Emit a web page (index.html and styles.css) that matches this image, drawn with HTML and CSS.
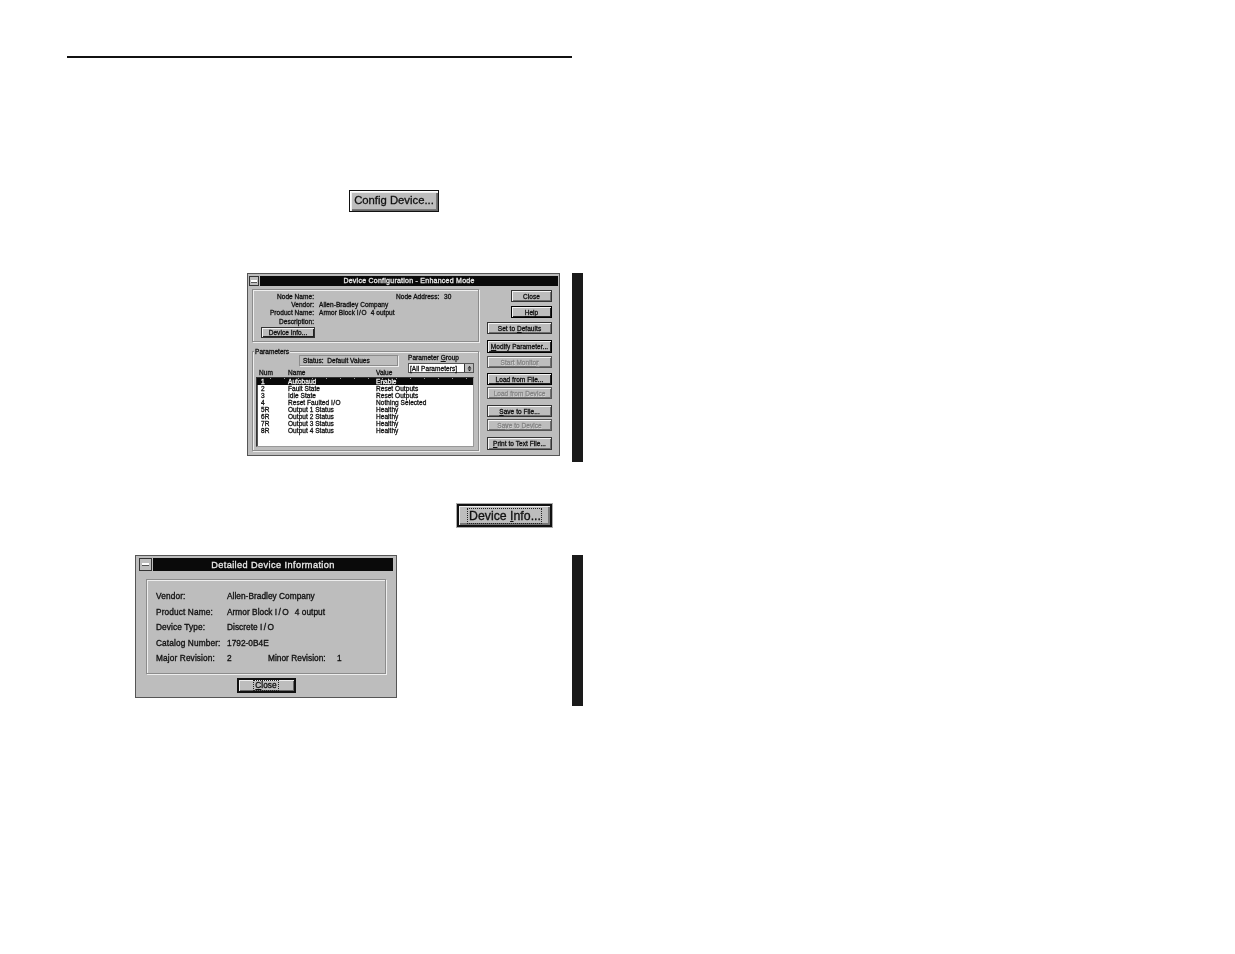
FILE: index.html
```html
<!DOCTYPE html>
<html lang="en">
<head>
<meta charset="utf-8">
<title>Device Configuration</title>
<link rel="stylesheet" href="styles.css">
</head>
<body>
<main class="page">
  <hr class="rule">
  <div class="config-wrap"><button class="shot-btn shot-config">Config Device...</button></div>

  <section class="row row-one">
    <div class="dialog dlg-main">
      <header class="titlebar">
        <span class="sysbox"></span>
        <h1 class="title">Device Configuration - Enhanced Mode</h1>
      </header>
      <div class="main-body">
        <div class="left-col">
          <div class="group info-group">
            <div class="info-grid">
              <span class="lab">Node Name:</span><span></span><span class="addr">Node Address:</span><span>30</span>
              <span class="lab">Vendor:</span><span class="wide">Allen-Bradley Company</span>
              <span class="lab">Product Name:</span><span class="wide">Armor Block <span class="io">I/O</span>&nbsp; 4 output</span>
              <span class="lab">Description:</span><span class="wide"></span>
            </div>
            <button class="btn btn-info">Device <u>I</u>nfo...</button>
          </div>
          <div class="group params-group">
            <span class="legend">Parameters</span>
            <div class="params-top">
              <div class="params-left">
                <div class="status">Status:&nbsp; Default Values</div>
                <div class="cols head"><span>Num</span><span>Name</span><span>Value</span></div>
              </div>
              <div class="params-right">
                <div class="pg-label">Parameter <u>G</u>roup</div>
                <div class="combo">
                  <span class="combo-text">[All Parameters]</span>
                  <span class="combo-arrow">
                    <svg class="arrow-icon" viewBox="0 0 7 8" aria-hidden="true"><path d="M3.5 0.5 L6 3 H1 Z M1 4 H6 V4.8 H1 Z M1 5.5 H6 L3.5 8 Z"/></svg>
                  </span>
                </div>
              </div>
            </div>
            <div class="list">
              <div class="cols item selected"><span>1</span><span>Autobaud</span><span>Enable</span></div>
              <div class="cols item"><span>2</span><span>Fault State</span><span>Reset Outputs</span></div>
              <div class="cols item"><span>3</span><span>Idle State</span><span>Reset Outputs</span></div>
              <div class="cols item"><span>4</span><span>Reset Faulted <span class="io">I/O</span></span><span>Nothing Selected</span></div>
              <div class="cols item"><span>5R</span><span>Output 1 Status</span><span>Healthy</span></div>
              <div class="cols item"><span>6R</span><span>Output 2 Status</span><span>Healthy</span></div>
              <div class="cols item"><span>7R</span><span>Output 3 Status</span><span>Healthy</span></div>
              <div class="cols item"><span>8R</span><span>Output 4 Status</span><span>Healthy</span></div>
            </div>
          </div>
        </div>
        <div class="right-col">
          <div class="stack stack-top">
            <button class="btn btn-short">Close</button>
            <button class="btn btn-short btn-strong"><u>H</u>elp</button>
            <button class="btn">Set to <u>D</u>efaults</button>
          </div>
          <div class="stack stack-mon">
            <button class="btn btn-strong btn-modify"><u>M</u>odify Parameter...</button>
            <button class="btn off">Start Monito<u>r</u></button>
          </div>
          <div class="stack">
            <button class="btn btn-strong"><u>L</u>oad from File...</button>
            <button class="btn off">Load from Device</button>
          </div>
          <div class="stack">
            <button class="btn"><u>S</u>ave to File...</button>
            <button class="btn off">Sa<u>v</u>e to Device</button>
          </div>
          <div class="stack">
            <button class="btn btn-tall"><u>P</u>rint to Text File...</button>
          </div>
        </div>
      </div>
    </div>
    <div class="sidebar side-one"></div>
  </section>

  <div class="info-wrap"><button class="shot-info"><span class="focus">Device <u>I</u>nfo...</span></button></div>

  <section class="row row-two">
    <div class="dialog dlg-detail">
      <header class="titlebar titlebar-lg">
        <span class="sysbox"></span>
        <h2 class="title">Detailed Device Information</h2>
      </header>
      <div class="detail-group">
        <div class="detail-row"><span class="d-lab">Vendor:</span><span>Allen-Bradley Company</span></div>
        <div class="detail-row"><span class="d-lab">Product Name:</span><span>Armor Block <span class="io">I/O</span>&nbsp; 4 output</span></div>
        <div class="detail-row"><span class="d-lab">Device Type:</span><span>Discrete <span class="io">I/O</span></span></div>
        <div class="detail-row"><span class="d-lab">Catalog Number:</span><span>1792-0B4E</span></div>
        <div class="detail-row"><span class="d-lab">Major Revision:</span><span class="d-major">2</span><span class="d-minor">Minor Revision:</span><span>1</span></div>
      </div>
      <div class="detail-foot"><button class="close-btn"><span class="focus"><u>C</u>lose</span></button></div>
    </div>
    <div class="sidebar side-two"></div>
  </section>
</main>
</body>
</html>
```

FILE: styles.css
```css
* { box-sizing: border-box; }
html, body { margin: 0; background: #fff; }
body {
  width: 1235px;
  height: 954px;
  overflow: hidden;
  font-family: "Liberation Sans", Arial, sans-serif;
  color: #111;
}
button { font: inherit; color: inherit; padding: 0; margin: 0; letter-spacing: inherit; }
h1, h2 { margin: 0; font: inherit; }
u { text-underline-offset: 1px; }

.page { padding: 56px 0 0 67px; width: 600px; }
.rule { width: 505px; height: 2px; margin: 0; border: 0; background: #111; }

.config-wrap { margin: 132px 0 0 282px; display: flex; }
.shot-btn {
  width: 90px;
  height: 22px;
  padding-bottom: 2px;
  border: 1px solid #111;
  background: #bdbdbd;
  box-shadow: inset 1px 1px 0 #fff, inset 2px 2px 0 #eee, inset -1px -1px 0 #666, inset -2px -2px 0 #777;
  font-size: 11.3px;
  white-space: nowrap;
  filter: blur(.25px);
  -webkit-text-stroke: .3px #111;
}

.row { display: flex; justify-content: space-between; align-items: flex-start; width: 516px; }
.row-one { margin: 61px 0 0 0; padding-left: 180px; }
.row-two { margin: 28px 0 0 0; padding-left: 68px; }
.sidebar { width: 11px; background: #1a1a1a; }
.side-one { height: 189px; }
.side-two { height: 151px; }

.info-wrap { margin: 42px 0 0 390px; display: flex; }
.shot-info {
  width: 95px;
  height: 23px;
  padding-top: 1px;
  background: #bdbdbd;
  border: 2px solid #111;
  outline: 1px solid #aaa;
  box-shadow: inset 1px 1px 0 #eee, inset -2px -2px 0 #777;
  font-size: 12.3px;
  display: flex;
  align-items: center;
  justify-content: center;
  filter: blur(.25px);
  -webkit-text-stroke: .3px #111;
}
.focus { border: 1px dotted #222; padding: 0 1px; line-height: 1; white-space: nowrap; display: block; }
.shot-info .focus { padding: 1px 0 1px 1px; }

.dialog {
  background: #bdbdbd;
  border: 1px solid #555;
  filter: blur(.3px);
}
.dlg-main {
  width: 313px;
  height: 183px;
  padding: 2px 1px 1px;
  font-size: 6.5px;
  line-height: 7px;
  letter-spacing: .05px;
  -webkit-text-stroke: .3px currentColor;
}
.dlg-detail {
  width: 262px;
  height: 143px;
  padding: 2px 3px;
  font-size: 8.3px;
  letter-spacing: .03px;
  -webkit-text-stroke: .32px currentColor;
}
.io { letter-spacing: .5px; }
.dlg-detail .io { letter-spacing: 1.4px; }

.titlebar { display: flex; gap: 1px; height: 10px; }
.titlebar-lg { height: 13px; }
.sysbox {
  flex: none;
  width: 10px;
  background: #bdbdbd;
  border: 1px solid #333;
  display: flex;
  align-items: center;
  justify-content: center;
}
.titlebar-lg .sysbox { width: 13px; }
.sysbox::before { content: ""; width: 70%; height: 2px; background: #fff; border-bottom: 1px solid #555; }
.title {
  flex: 1;
  background: #0a0a0a;
  color: #e8e8e8;
  text-align: center;
  line-height: 10px;
  font-size: 7px;
  font-weight: 400;
  letter-spacing: .25px;
}
.titlebar-lg .title { line-height: 14px; font-size: 9.2px; letter-spacing: .4px; }

.main-body { display: flex; padding: 3px 0 0 3px; }
.left-col { width: 227px; flex: none; }
.right-col { margin: 1px 0 0 8px; width: 65px; display: flex; flex-direction: column; gap: 6px; }

.group {
  position: relative;
  border: 1px solid #8c8c8c;
  box-shadow: 1px 1px 0 #eee, inset 1px 1px 0 #eee;
}
.info-group { height: 53px; padding: 3px 0 0 0; }
.params-group { height: 100px; margin-top: 9px; }

.info-grid {
  display: grid;
  grid-template-columns: 61px 72px 43px auto;
  column-gap: 5px;
  row-gap: 1.2px;
  white-space: nowrap;
}
.lab, .addr { text-align: right; }
.wide { grid-column: 2 / 5; }

.btn {
  display: block;
  width: 65px;
  height: 12px;
  border: 1px solid #333;
  background: #bdbdbd;
  box-shadow: inset 1px 1px 0 #f4f4f4, inset -1px -1px 0 #6e6e6e;
  font-size: 6.5px;
  line-height: 9px;
  white-space: nowrap;
  overflow: hidden;
}
.btn-short { width: 41px; margin-left: 24px; }
.btn-strong { border-color: #000; box-shadow: inset 1px 1px 0 #f4f4f4, inset -1px -1px 0 #222; }
.btn-modify { height: 13px; }
.btn-tall { height: 13px; }
.btn-info { width: 54px; height: 11px; margin: 2px 0 0 8px; box-shadow: inset 1px 1px 0 #f4f4f4, inset -1px -1px 0 #222; }
.off { color: #868686; text-shadow: .5px .5px 0 #e0e0e0; border-color: #555; }

.stack { display: flex; flex-direction: column; gap: 2px; }
.stack-top { gap: 4px; }
.stack-mon { gap: 3px; margin-bottom: -1px; }

.legend {
  position: absolute;
  left: 1px;
  top: -4px;
  padding: 0 1px;
  background: #bdbdbd;
}
.params-top { display: flex; height: 25px; }
.params-left { width: 155px; flex: none; padding-top: 3px; }
.status {
  margin-left: 46px;
  width: 99px;
  height: 11px;
  border: 1px solid #8c8c8c;
  box-shadow: 1px 1px 0 #eee;
  padding-left: 3px;
  line-height: 10px;
}
.cols { display: grid; grid-template-columns: 29px 88px auto; white-space: nowrap; }
.head { margin-top: 3px; padding-left: 6px; line-height: 8px; }
.params-right { padding-top: 2px; white-space: nowrap; }
.pg-label { height: 9px; line-height: 8px; }
.combo {
  width: 66px;
  height: 10px;
  background: #fff;
  border: 1px solid #555;
  display: flex;
  justify-content: space-between;
  line-height: 9px;
  position: relative;
  z-index: 1;
}
.combo-text { padding-left: 1px; }
.combo-arrow {
  flex: none;
  width: 9px;
  background: #bdbdbd;
  border-left: 1px solid #333;
  display: flex;
  align-items: center;
  justify-content: center;
}
.arrow-icon { width: 5px; height: 7px; fill: #111; }
.list {
  margin: 0 0 0 3px;
  width: 218px;
  height: 70px;
  background: #fff;
  border: 1px solid #333;
  border-right-color: #999;
  border-bottom-color: #999;
  box-shadow: inset 1px 1px 0 #555;
}
.list .cols { grid-template-columns: 27px 88px auto; }
.item { height: 7px; line-height: 7px; padding-left: 4px; }
.selected {
  background-image: repeating-linear-gradient(90deg, #0a0a0a 0 13px, #999 13px 14px);
  background-size: 100% 1px;
  background-repeat: no-repeat;
  background-color: #0a0a0a;
  color: #eee;
}

.detail-group {
  margin: 8px 7px 0 7px;
  height: 95px;
  border: 1px solid #8c8c8c;
  box-shadow: 1px 1px 0 #eee, inset 1px 1px 0 #eee;
  padding: 11px 0 0 9px;
  display: flex;
  flex-direction: column;
  gap: 5.3px;
  white-space: nowrap;
}
.detail-row { display: flex; height: 10.3px; line-height: 10px; }
.d-lab { width: 71px; flex: none; letter-spacing: .12px; }
.d-major { width: 41px; flex: none; }
.d-minor { width: 69px; flex: none; }
.detail-foot { display: flex; justify-content: center; margin-top: 4px; }
.close-btn {
  width: 59px;
  height: 15px;
  border: 2px solid #111;
  background: #bdbdbd;
  box-shadow: inset 1px 1px 0 #eee, inset -1px -1px 0 #666;
  font-size: 8.3px;
  display: flex;
  align-items: center;
  justify-content: center;
}
```
